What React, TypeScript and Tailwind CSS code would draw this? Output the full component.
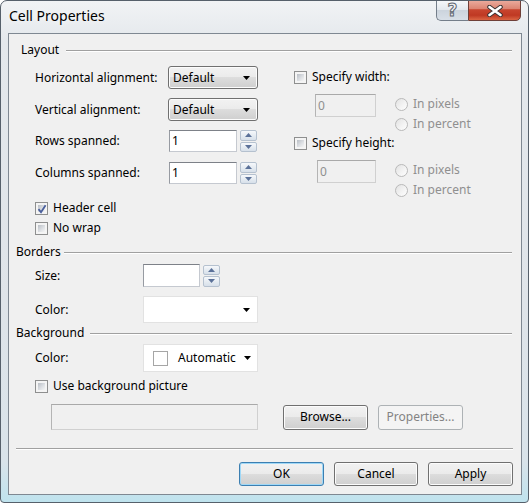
import React from 'react';

const btnFace =
  'bg-[linear-gradient(180deg,#f2f2f2_0%,#ebebeb_49%,#dddddd_50%,#cfcfcf_100%)] shadow-[inset_0_0_0_1px_#fcfcfc]';

function Arrow() {
  return (
    <svg width="7" height="4" viewBox="0 0 7 4">
      <path d="M0 0h7L3.5 4z" fill="#000" />
    </svg>
  );
}

function Combo({ value, className }: { value: string; className: string }) {
  return (
    <div
      className={`${className} h-[23px] flex items-center justify-between pl-[4px] pr-[7px] rounded-[3px] border border-[#707070] ${btnFace}`}
    >
      <span>{value}</span>
      <Arrow />
    </div>
  );
}

function SpinHalf({ up }: { up?: boolean }) {
  return (
    <div className="flex-1 flex items-center justify-center rounded-[2px] border border-[#b5c1cf] bg-[linear-gradient(180deg,#f6f8fb_0%,#e6ecf2_50%,#d7e0ea_100%)]">
      <svg width="7" height="4" viewBox="0 0 7 4">
        <path d={up ? 'M0 4h7L3.5 0z' : 'M0 0h7L3.5 4z'} fill="#5b7199" />
      </svg>
    </div>
  );
}

function Spinner() {
  return (
    <div className="flex flex-col w-[17px] h-[22px] ml-[3px] gap-px">
      <SpinHalf up />
      <SpinHalf />
    </div>
  );
}

function TextBox({ value, className }: { value: string; className: string }) {
  return (
    <div
      className={`${className} flex items-center pl-[2px] bg-white border border-[#c5c9d0] border-t-[#7d8188] border-l-[#979ba2]`}
    >
      {value}
    </div>
  );
}

function DisabledBox({ value, className }: { value: string; className: string }) {
  return (
    <div
      className={`${className} flex items-center pl-[2px] bg-[#f0f0f0] text-[#8f8f8f] border border-[#d0d0d0] border-t-[#a9a9a9] border-l-[#b4b4b4]`}
    >
      {value}
    </div>
  );
}

function CheckBox({ label, checked }: { label: string; checked?: boolean }) {
  return (
    <div className="flex items-center h-[16px]">
      <div className="relative w-[13px] h-[13px] border border-[#8e8f8f] bg-[#f4f4f4] p-[2px]">
        <div className="w-full h-full bg-[linear-gradient(135deg,#b9bec5_0%,#dcdfe3_55%,#f5f5f5_100%)]" />
        {checked && (
          <svg className="absolute left-[1px] top-[1px]" width="10" height="10" viewBox="0 0 10 10">
            <path d="M1.5 5.2L4 8.2L8.6 1.2" fill="none" stroke="#4a5f9c" strokeWidth="1.8" />
          </svg>
        )}
      </div>
      <span className="ml-[5px]">{label}</span>
    </div>
  );
}

function Radio({ label }: { label: string }) {
  return (
    <div className="flex items-center h-[16px] text-[#8f8f8f]">
      <div className="w-[13px] h-[13px] rounded-full border border-[#b9b9b9] bg-[linear-gradient(135deg,#e2e2e2_0%,#f4f4f4_60%,#fdfdfd_100%)]" />
      <span className="ml-[5px]">{label}</span>
    </div>
  );
}

function GroupLine({ className }: { className: string }) {
  return <div className={`${className} flex-1 h-px bg-[#a0a0a0] shadow-[0_1px_0_#ffffff]`} />;
}

function SizeGroup({ inputClass }: { inputClass: string }) {
  return (
    <div className="flex mt-[9px] h-[38px]">
      <DisabledBox value="0" className={inputClass} />
      <div className="flex flex-col ml-[19px]">
        <div className="mt-[2px]">
          <Radio label="In pixels" />
        </div>
        <div className="mt-[4px]">
          <Radio label="In percent" />
        </div>
      </div>
    </div>
  );
}

export default function App() {
  return (
    <div className="w-[529px] h-[503px] font-['Noto_Sans',sans-serif] text-[12px] leading-[16px] text-black">
      <div className="w-full h-full flex flex-col border border-[#56606b] rounded-t-[7px] rounded-b-[4px] overflow-hidden bg-[linear-gradient(180deg,#f1f3f5_0%,#e4e8ec_8%,#dfe4e9_60%,#d9e3ea_92%,#bfe3ee_100%)]">
        {/* title bar */}
        <div className="h-[32px] shrink-0 flex items-start justify-between">
          <div className="pl-[8px] pt-[6px] text-[14px] leading-[18px] [text-shadow:0_0_7px_#ffffff]">
            Cell Properties
          </div>
          <div className="flex mr-[7px] -mt-px">
            <div className="w-[32px] h-[21px] flex items-center justify-center rounded-bl-[5px] border border-r-0 border-[#747e8a] bg-[linear-gradient(180deg,#f5f7f9_0%,#e3e8ed_45%,#ccd4dd_50%,#d8dfe7_100%)]">
              <span className="font-['DejaVu_Sans',sans-serif] font-bold text-[17px] leading-[17px] text-[#f2f2f2] [-webkit-text-stroke:1px_#5f6670]">
                ?
              </span>
            </div>
            <div className="w-[53px] h-[21px] flex items-center justify-center rounded-br-[5px] border border-[#6e3f38] bg-[linear-gradient(180deg,#eaa99b_0%,#dc8573_40%,#c8452f_46%,#bf3923_75%,#db6644_100%)]">
              <svg width="16" height="12" viewBox="0 0 16 12">
                <path d="M2.5 2L13.5 10M13.5 2L2.5 10" stroke="#3d3434" strokeWidth="4.6" strokeLinecap="round" />
                <path d="M2.5 2L13.5 10M13.5 2L2.5 10" stroke="#ffffff" strokeWidth="2.6" strokeLinecap="round" />
              </svg>
            </div>
          </div>
        </div>

        {/* client area */}
        <div className="ml-[7px] w-[514px] h-[462px] border border-[#7f8892] bg-[#f0f0f0] flex flex-col">
          {/* Layout */}
          <div className="flex items-center h-[16px] mt-[8px] pl-[12px] pr-[9px]">
            <span>Layout</span>
            <GroupLine className="ml-[7px]" />
          </div>

          <div className="flex pl-[26px]">
            <div className="w-[223px] flex flex-col">
              <div className="flex items-center mt-[8px] h-[23px]">
                <span className="w-[133px]">Horizontal alignment:</span>
                <Combo value="Default" className="w-[90px]" />
              </div>
              <div className="flex items-center mt-[9px] h-[23px]">
                <span className="w-[133px]">Vertical alignment:</span>
                <Combo value="Default" className="w-[90px]" />
              </div>
              <div className="flex items-center mt-[9px] h-[22px]">
                <span className="w-[134px]">Rows spanned:</span>
                <TextBox value="1" className="w-[68px] h-[22px]" />
                <Spinner />
              </div>
              <div className="flex items-center mt-[10px] h-[22px]">
                <span className="w-[134px]">Columns spanned:</span>
                <TextBox value="1" className="w-[68px] h-[22px]" />
                <Spinner />
              </div>
              <div className="mt-[16px]">
                <CheckBox label="Header cell" checked />
              </div>
              <div className="mt-[4px]">
                <CheckBox label="No wrap" />
              </div>
            </div>

            <div className="ml-[36px] flex flex-col">
              <div className="mt-[11px]">
                <CheckBox label="Specify width:" />
              </div>
              <SizeGroup inputClass="ml-[21px] w-[61px] h-[23px]" />
              <div className="mt-[3px]">
                <CheckBox label="Specify height:" />
              </div>
              <SizeGroup inputClass="ml-[23px] w-[59px] h-[23px]" />
            </div>
          </div>

          {/* Borders */}
          <div className="flex items-center h-[16px] mt-[8px] pl-[7px] pr-[9px]">
            <span>Borders</span>
            <GroupLine className="ml-[3px]" />
          </div>
          <div className="flex items-center mt-[4px] h-[23px] pl-[26px]">
            <span className="w-[108px]">Size:</span>
            <TextBox value="" className="w-[57px] h-[23px]" />
            <Spinner />
          </div>
          <div className="flex items-center mt-[9px] h-[27px] pl-[26px]">
            <span className="w-[108px]">Color:</span>
            <div className="w-[115px] h-[27px] flex items-center justify-end pr-[7px] bg-white border border-[#e2e2e2]">
              <Arrow />
            </div>
          </div>

          {/* Background */}
          <div className="flex items-center h-[16px] mt-[2px] pl-[7px] pr-[9px]">
            <span>Background</span>
            <GroupLine className="ml-[6px]" />
          </div>
          <div className="flex items-center mt-[3px] h-[28px] pl-[26px]">
            <span className="w-[108px]">Color:</span>
            <div className="w-[115px] h-[28px] flex items-center pl-[9px] pr-[6px] bg-white border border-[#e2e2e2]">
              <div className="w-[15px] h-[15px] border border-[#a6a6a6] bg-white" />
              <span className="ml-[10px] flex-1">Automatic</span>
              <Arrow />
            </div>
          </div>
          <div className="mt-[6px] pl-[26px]">
            <CheckBox label="Use background picture" />
          </div>
          <div className="flex items-center mt-[10px] h-[26px] pl-[42px]">
            <DisabledBox value="" className="w-[207px] h-[26px]" />
            <button
              className={`ml-[25px] w-[85px] h-[25px] flex items-center justify-center rounded-[3px] border border-[#707070] ${btnFace}`}
            >
              Browse...
            </button>
            <button className="ml-[10px] w-[85px] h-[25px] flex items-center justify-center rounded-[3px] border border-[#adb2b5] bg-[#f4f4f4] text-[#838383]">
              Properties...
            </button>
          </div>

          {/* separator + dialog buttons */}
          <div className="mt-[18px] ml-[7px] mr-[8px] h-px bg-[#a0a0a0] shadow-[0_1px_0_#ffffff]" />
          <div className="flex justify-end gap-[10px] mt-[13px] pr-[8px]">
            <button className="w-[85px] h-[24px] flex items-center justify-center rounded-[3px] border border-[#3c7fb1] bg-[linear-gradient(180deg,#f2f2f2_0%,#ebebeb_49%,#dddddd_50%,#cfcfcf_100%)] shadow-[inset_0_0_0_1px_#9fd8f7]">
              OK
            </button>
            <button
              className={`w-[84px] h-[24px] flex items-center justify-center rounded-[3px] border border-[#707070] ${btnFace}`}
            >
              Cancel
            </button>
            <button
              className={`w-[85px] h-[24px] flex items-center justify-center rounded-[3px] border border-[#707070] ${btnFace}`}
            >
              Apply
            </button>
          </div>
        </div>
      </div>
    </div>
  );
}
